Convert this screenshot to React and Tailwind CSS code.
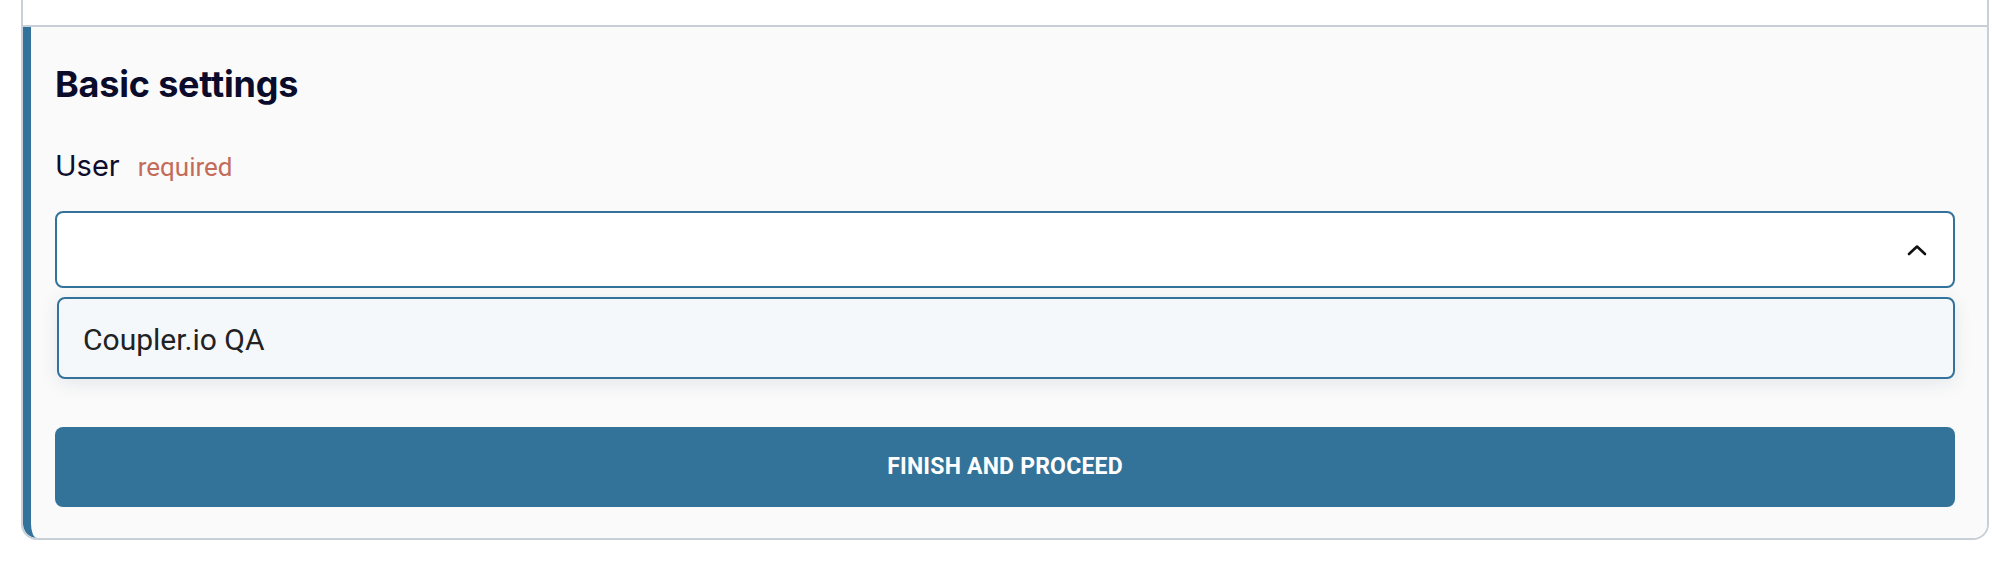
/**
 * Basic settings step
 * Collapsed panel header above, open "Basic settings" section with a user
 * select (dropdown open) and the finish button.
 */
import { useState } from 'react';

const users = ['Coupler.io QA'];

function ChevronUp() {
  return (
    <svg width="20" height="12" viewBox="0 0 20 12" fill="none" aria-hidden="true">
      <polyline points="2,10 10,2.5 18,10" stroke="#111" strokeWidth="2.6" strokeLinecap="round" strokeLinejoin="round" />
    </svg>
  );
}

export default function App() {
  const [selected, setSelected] = useState(null);
  const [open, setOpen] = useState(true);

  return (
    <div className="min-h-[574px] bg-white pl-[21px] pr-[21px] font-['Inter',sans-serif]">
      <div className="border-x-2 border-b-2 border-[#c8cfd6] rounded-b-[16px] overflow-hidden">
        {/* Previous (collapsed) step */}
        <div className="h-[27px] bg-white border-b-2 border-[#c8cfd6]" />

        {/* Basic settings step */}
        <div className="bg-[#fafafa] border-l-[8px] border-[#33729a] rounded-bl-[14px] pl-[24px] pr-[32px] pt-[35px] pb-[31px]">
          <h2 className="text-[36px] leading-[44px] font-bold text-[#0b0b2b] tracking-[-0.2px]">Basic settings</h2>

          {/* User field */}
          <div className="mt-[43px] flex items-baseline gap-[18px]">
            <span className="text-[29px] leading-[34px] text-[#0e0e2c]">User</span>
            <span className="text-[26px] leading-[34px] text-[#c46b5a] font-['Roboto',sans-serif]">required</span>
          </div>

          <button
            onClick={() => setOpen(!open)}
            className="mt-[27px] w-full h-[77px] flex items-center justify-between bg-white border-2 border-[#33729a] rounded-[8px] pl-[24px] pr-[26px] text-left"
          >
            <span className="text-[30px] text-[#222] font-['Roboto',sans-serif]">{selected}</span>
            <ChevronUp />
          </button>

          {/* Options list */}
          {open && (
            <ul className="mt-[9px] ml-[2px] bg-[#f5f8fa] border-2 border-[#33729a] rounded-[8px] shadow-[0_4px_18px_rgba(30,60,90,0.10)]">
              {users.map((u) => (
                <li
                  key={u}
                  onClick={() => { setSelected(u); setOpen(false); }}
                  className="h-[78px] pl-[24px] pt-[23px] text-[30px] leading-[35px] text-[#222] font-['Roboto',sans-serif] cursor-pointer"
                >
                  {u}
                </li>
              ))}
            </ul>
          )}

          <button className="mt-[48px] w-full h-[80px] bg-[#337399] rounded-[8px] text-white text-[23px] font-bold tracking-[0.2px] font-['Roboto',sans-serif]">
            FINISH AND PROCEED
          </button>
        </div>
      </div>
    </div>
  );
}
